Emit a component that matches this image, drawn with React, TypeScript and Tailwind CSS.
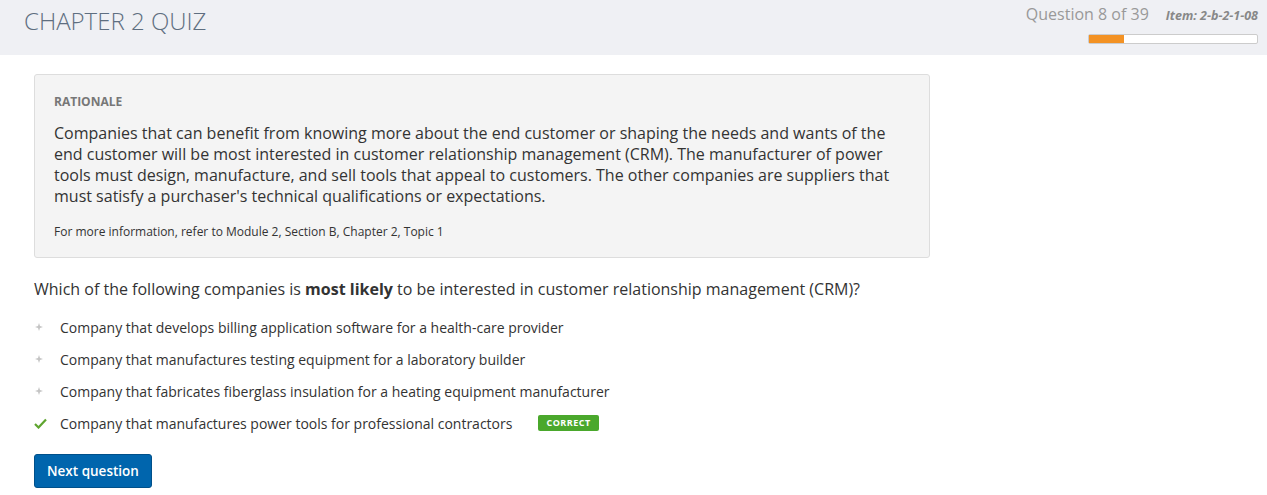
export default function App() {
  const options = [
    "Company that develops billing application software for a health-care provider",
    "Company that manufactures testing equipment for a laboratory builder",
    "Company that fabricates fiberglass insulation for a heating equipment manufacturer",
  ];

  return (
    <div className="min-h-screen bg-white font-['Open_Sans',sans-serif] text-[#333]">
      {/* header */}
      <div className="h-[55px] bg-[#eff0f4] flex justify-between">
        <h1 className="pl-[24px] pt-[5px] text-[24px] font-light text-[#5e6e80] leading-[32px]">
          CHAPTER 2 QUIZ
        </h1>
        <div className="pr-[9px] pt-[4px] flex flex-col items-end">
          <div className="flex items-baseline gap-[17px]">
            <span className="text-[16px] text-[#999] leading-[20px]">Question 8 of 39</span>
            <span className="text-[12.5px] font-bold italic text-[#888]">Item: 2-b-2-1-08</span>
          </div>
          <div className="mt-[8px] w-[170px] h-[10px] border border-[#ccc] bg-white rounded-[2px] flex">
            <div className="w-[35px] bg-[#f39224]" />
          </div>
        </div>
      </div>

      <div className="px-[34px] pt-[19px]">
        {/* rationale */}
        <div className="w-[896px] bg-[#f4f4f4] border border-[#ddd] rounded-[3px] px-[19px] pt-[19px] pb-[17px]">
          <div className="text-[12px] font-bold text-[#777] leading-[16px]">RATIONALE</div>
          <p className="mt-[13px] text-[16px] leading-[21px] text-[#333]">
            Companies that can benefit from knowing more about the end customer or shaping the needs and wants of the end
            customer will be most interested in customer relationship management (CRM). The manufacturer of power tools must
            design, manufacture, and sell tools that appeal to customers. The other companies are suppliers that must satisfy a
            purchaser's technical qualifications or expectations.
          </p>
          <p className="mt-[17px] text-[12px] leading-[16px] text-[#333]">
            For more information, refer to Module 2, Section B, Chapter 2, Topic 1
          </p>
        </div>

        {/* question */}
        <p className="mt-[20px] text-[16px] leading-[22px]">
          Which of the following companies is <strong className="font-bold">most likely</strong> to be interested in customer
          relationship management (CRM)?
        </p>

        <ul className="mt-[11px] flex flex-col">
          {options.map((o) => (
            <li key={o} className="h-[32px] flex items-center text-[14px]">
              <span className="w-[26px] pl-[1px] flex items-center">
                <svg width="8" height="8" viewBox="0 0 8 8">
                  <path d="M4 0 L5 3 L8 4 L5 5 L4 8 L3 5 L0 4 L3 3 Z" fill="#c4c4c4" />
                </svg>
              </span>
              <span>{o}</span>
            </li>
          ))}
          <li className="h-[32px] flex items-center text-[14px]">
            <span className="w-[26px] flex items-center">
              <svg width="13" height="11" viewBox="0 0 13 11">
                <path d="M1 6 L4.5 9.5 L12 1.5" fill="none" stroke="#5fa52f" strokeWidth="2.2" />
              </svg>
            </span>
            <span>Company that manufactures power tools for professional contractors</span>
            <span className="ml-[26px] h-[16px] px-[8px] bg-[#4aa82c] rounded-[2px] text-[9px] font-bold text-white tracking-[0.5px] flex items-center">
              CORRECT
            </span>
          </li>
        </ul>

        <button className="mt-[15px] h-[34px] px-[12px] bg-[#0065ad] border border-[#00508a] rounded-[3px] text-white text-[13.5px] font-semibold">
          Next question
        </button>
      </div>
    </div>
  );
}
